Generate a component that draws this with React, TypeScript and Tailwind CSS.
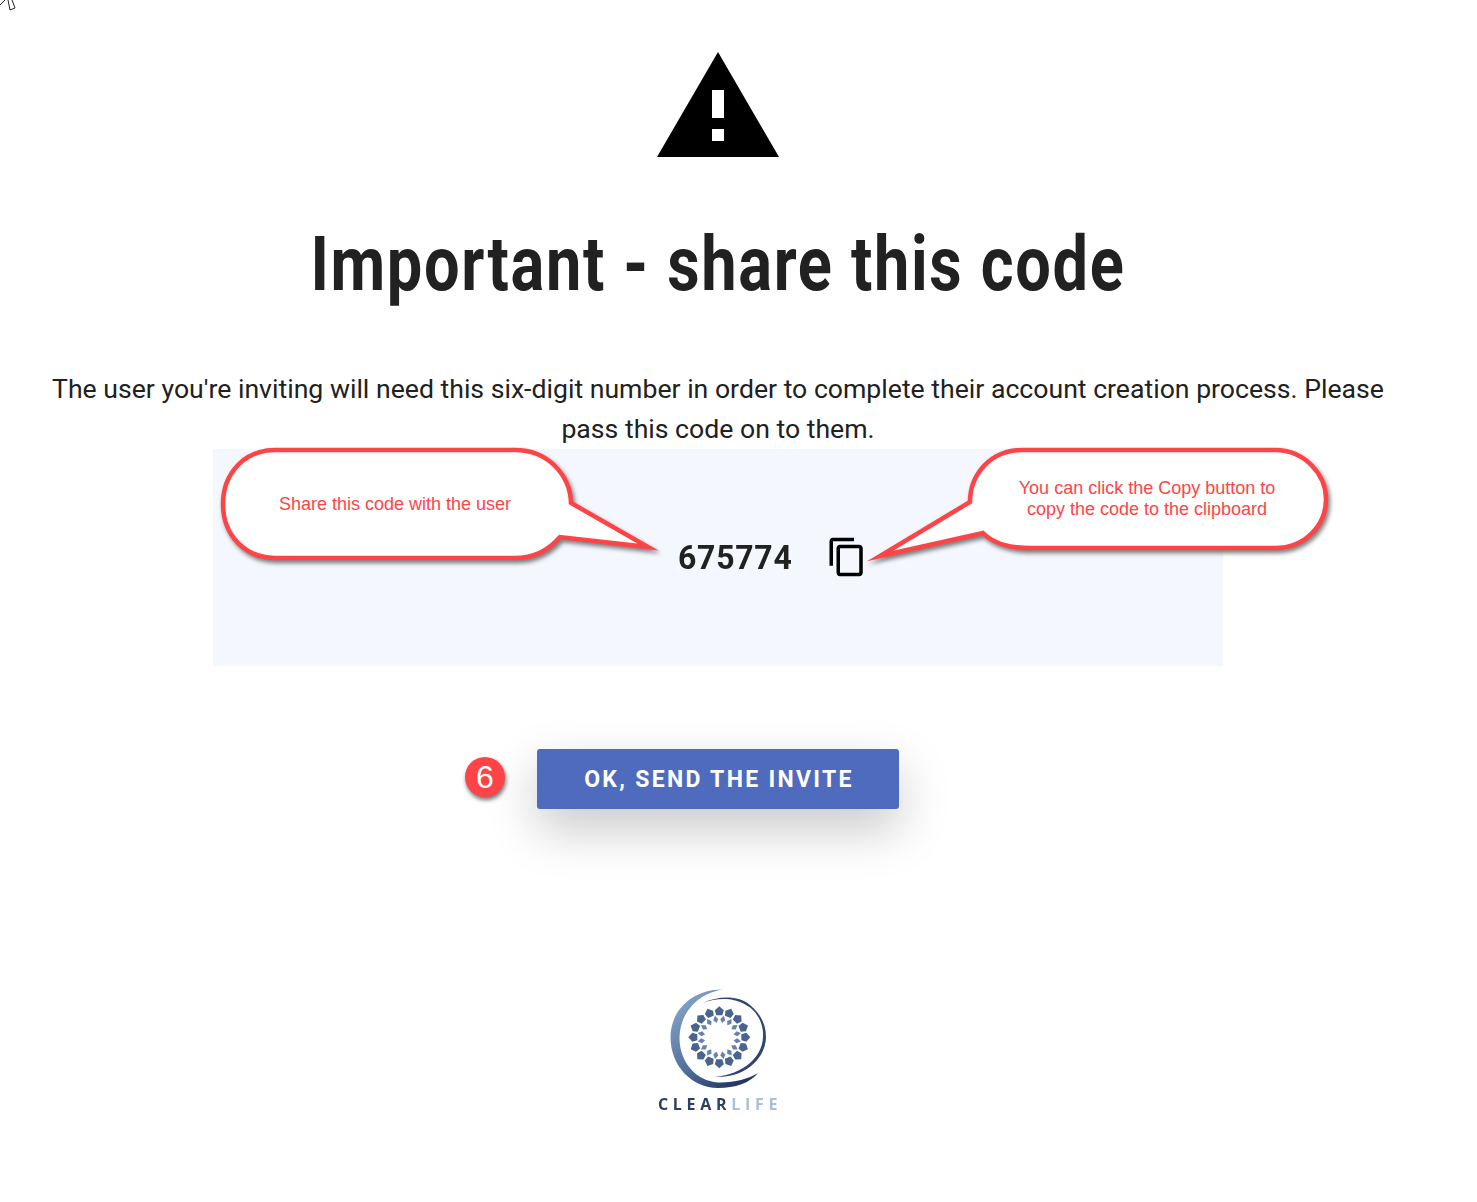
const PETALS = Array.from({ length: 16 }, (_, i) => i * 22.5);

function Logo() {
  return (
    <svg width="120" height="106" viewBox="0 0 120 106" className="blur-[0.6px]">
      <defs>
        <linearGradient id="cres" x1="0.1" y1="0.2" x2="0.7" y2="1">
          <stop offset="0" stopColor="#7f9cc2" />
          <stop offset="0.55" stopColor="#4f6e9a" />
          <stop offset="1" stopColor="#26385f" />
        </linearGradient>
      </defs>
      <path
        fill="url(#cres)"
        d="M65 1.5C35 1 12.5 22 12.5 49C12.5 78 34 100 60 100C77 100 92 95 100 85C90 91 75 95 60 94.5C38 93 21 74 21.5 49C22 25 40 5 65 1.5Z"
      />
      <path
        fill="#2f4674"
        d="M45 15C60 8 80 7 92 17C103 26 108 37 108 49C108 68 90 90 57 89C85 86 104 70 105 49C106 35 98 22 88 17C75 9 58 10 45 15Z"
      />
      <g transform="translate(61.3 49.3)">
        {PETALS.map((a) => (
          <g key={a} transform={`rotate(${a})`}>
            <path d="M0 -31L4.5 -27L3 -22L-3 -22L-4.5 -27Z" fill="#4a648e" />
            <path
              d="M0 -22L2.6 -18L0 -14.5L-2.6 -18Z"
              fill="#6883a9"
              transform="rotate(11.25)"
            />
          </g>
        ))}
      </g>
    </svg>
  );
}

function Callouts() {
  return (
    <svg
      width="1140"
      height="130"
      viewBox="210 440 1140 130"
      className="absolute left-[210px] top-[440px] pointer-events-none drop-shadow-[2px_3px_2px_rgba(0,0,0,0.5)]"
    >
      <path
        fill="#ffffff"
        stroke="#ff4447"
        strokeWidth="4.5"
        strokeMiterlimit="20"
        d="M275 450H515C548 450 570 475 571 503L648 547L560 537C548 551 533 558 515 558H275C245 558 223 535 223 504C223 473 245 450 275 450Z"
      />
      <path
        fill="#ffffff"
        stroke="#ff4447"
        strokeWidth="4.5"
        strokeMiterlimit="20"
        d="M1022 450H1275C1305 450 1326 475 1326 499C1326 525 1305 548 1275 548H1030C1008 548 993 543 983 533L880 556L970 502C970 475 990 450 1022 450Z"
      />
    </svg>
  );
}

export default function App() {
  return (
    <div className="relative h-[1202px] w-[1477px] overflow-hidden bg-white font-['Roboto',sans-serif] text-[#212121]">
      <svg width="18" height="12" viewBox="0 0 18 12" className="absolute left-0 top-0">
        <path d="M0 5L5 0M8 0L10 10L15 8L12 0" fill="none" stroke="#222" strokeWidth="1" />
      </svg>

      <div className="flex w-[1436px] flex-col items-center pt-[52px]">
        <svg width="122" height="106" viewBox="657 52 122 106" className="shrink-0">
          <path fill="#000" d="M718 52L779 157H657Z" />
          <rect x="712" y="90" width="12" height="28" fill="#fff" />
          <rect x="712" y="129" width="12" height="12" fill="#fff" />
        </svg>

        <h1 className="mt-[61px] h-[90px] whitespace-nowrap text-[76px] font-bold leading-[90px] tracking-[2px] scale-x-[0.83]">
          Important - share this code
        </h1>

        <p className="mt-[60px] w-[1360px] text-center text-[26.64px] leading-[40px]">
          The user you're inviting will need this six-digit number in order to complete their account creation process. Please pass this code on to them.
        </p>

        <div className="flex h-[217px] w-[1010px] items-start justify-center gap-[32px] bg-[#f4f7fd] pt-[87px]">
          <span className="ml-[109px] w-[116px] whitespace-nowrap text-[34px] font-bold leading-[42px] tracking-[0.8px] origin-left scale-x-[0.94]">675774</span>
          <svg width="42" height="42" viewBox="0 0 24 24" className="shrink-0">
            <path
              fill="#000"
              d="M16 1H4c-1.1 0-2 .9-2 2v14h2V3h12V1zm3 4H8c-1.1 0-2 .9-2 2v14c0 1.1.9 2 2 2h11c1.1 0 2-.9 2-2V7c0-1.1-.9-2-2-2zm0 16H8V7h11v14z"
            />
          </svg>
        </div>

        <div className="relative mt-[83px]">
          <div className="absolute left-[-72px] top-[8px] flex h-10 w-10 items-center justify-center rounded-full bg-[#ff4447] font-['Liberation_Sans',sans-serif] text-[32px] leading-none text-white shadow-[1px_3px_4px_rgba(0,0,0,0.55)]">
            6
          </div>
          <button className="flex h-[60px] w-[362px] items-center justify-center rounded-[3px] bg-[#4e6bbd] pl-[2px] pt-[2px] text-[23px] font-bold tracking-[2.3px] text-white shadow-[0_20px_50px_rgba(0,0,0,0.22)]">
            OK, SEND THE INVITE
          </button>
        </div>

        <div className="mt-[179px]">
          <Logo />
        </div>
        <div className="mt-[0px] whitespace-nowrap pl-[4px] font-['Open_Sans',sans-serif] text-[16px] font-bold leading-[20px] tracking-[4.7px] text-[#2c3e63] blur-[0.5px]">
          CLEAR<span className="text-[#a9c0dc]">LIFE</span>
        </div>
      </div>

      <Callouts />
      <div className="absolute left-[223px] top-[494px] w-[344px] text-center font-['Liberation_Sans',sans-serif] text-[18px] leading-[21px] text-[#ff4447]">
        Share this code with the user
      </div>
      <div className="absolute left-[972px] top-[478px] w-[350px] text-center font-['Liberation_Sans',sans-serif] text-[18px] leading-[21px] text-[#ff4447]">
        You can click the Copy button to
        <br />
        copy the code to the clipboard
      </div>
    </div>
  );
}
